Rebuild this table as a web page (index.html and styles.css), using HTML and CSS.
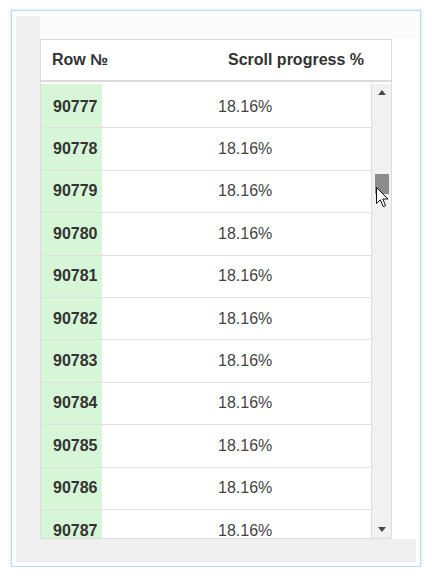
FILE: index.html
```html
<!DOCTYPE html>
<html>
<head>
<meta charset="utf-8">
<link rel="stylesheet" href="styles.css">
</head>
<body>
<div class="frame">
  <div class="sheet">
    <div class="gutter-left"></div>
    <div class="gutter-top"></div>
    <div class="grid">
      <div class="grid-head">
        <span>Row №</span>
        <span>Scroll progress %</span>
      </div>
      <div class="grid-body">
        <div class="rows">
          <div class="row"><span class="num">90777</span><span class="val">18.16%</span></div>
          <div class="row"><span class="num">90778</span><span class="val">18.16%</span></div>
          <div class="row"><span class="num">90779</span><span class="val">18.16%</span></div>
          <div class="row"><span class="num">90780</span><span class="val">18.16%</span></div>
          <div class="row"><span class="num">90781</span><span class="val">18.16%</span></div>
          <div class="row"><span class="num">90782</span><span class="val">18.16%</span></div>
          <div class="row"><span class="num">90783</span><span class="val">18.16%</span></div>
          <div class="row"><span class="num">90784</span><span class="val">18.16%</span></div>
          <div class="row"><span class="num">90785</span><span class="val">18.16%</span></div>
          <div class="row"><span class="num">90786</span><span class="val">18.16%</span></div>
          <div class="row"><span class="num">90787</span><span class="val">18.16%</span></div>
        </div>
        <div class="scrollbar">
          <div class="arrow up"></div>
          <div class="track"><div class="thumb"></div></div>
          <div class="arrow down"></div>
        </div>
        <svg class="cursor" width="14" height="21" viewBox="0 0 14 21">
          <path d="M0.5 0.5 L0.5 16.5 L4.3 12.8 L7.2 19.6 L9.6 18.6 L6.8 12 L12 12 Z" fill="#fff" stroke="#111" stroke-width="1"/>
        </svg>
      </div>
    </div>
    <div class="gutter-right"></div>
    <div class="gutter-bottom"></div>
  </div>
</div>
</body>
</html>
```
FILE: styles.css
```css
html, body {
  margin: 0;
  padding: 0;
  background: #fff;
}
body {
  font-family: "Liberation Sans", Arial, sans-serif;
}
.frame {
  box-sizing: border-box;
  margin: 10px 0 0 11px;
  width: 410px;
  height: 557px;
  border: 1px solid #b4dcee;
  box-shadow: 0 0 3px 1px #dcf0f8;
  padding: 5px 4px 4px 4px;
  background: #fff;
}
.sheet {
  width: 400px;
  height: 546px;
  display: grid;
  grid-template-columns: 24px 352px 24px;
  grid-template-rows: 23px 500px 23px;
}
.gutter-left {
  grid-column: 1;
  grid-row: 1 / 3;
  background: #efefef;
}
.gutter-top {
  grid-column: 2 / 4;
  grid-row: 1;
  background: #fbfbfb;
}
.gutter-right {
  grid-column: 3;
  grid-row: 2;
  background: #fff;
}
.gutter-bottom {
  grid-column: 1 / 4;
  grid-row: 3;
  background: #efefef;
}
.grid {
  grid-column: 2;
  grid-row: 2;
  box-sizing: border-box;
  border: 1px solid #dcdcdc;
  display: flex;
  flex-direction: column;
  background: #fff;
  overflow: hidden;
}
.grid-head {
  flex: none;
  height: 40px;
  border-bottom: 2px solid #dadada;
  display: flex;
  align-items: center;
  justify-content: space-between;
  padding: 0 27px 0 11px;
  font-size: 16px;
  font-weight: bold;
  color: #333;
}
.grid-body {
  flex: 1;
  position: relative;
  display: flex;
  margin-top: 2px;
  overflow: hidden;
}
.rows {
  flex: 1;
  padding-top: 2px;
  background: linear-gradient(to right, #d7f6d7 61px, #fff 61px);
  overflow: hidden;
}
.row {
  box-sizing: border-box;
  height: 42.4px;
  border-bottom: 1px solid #e1e1e1;
  display: flex;
  align-items: center;
  font-size: 16px;
}
.num {
  width: 61px;
  box-sizing: border-box;
  padding-left: 12px;
  font-weight: bold;
  color: #333;
}
.val {
  padding-left: 116px;
  color: #444;
}
.scrollbar {
  flex: none;
  width: 19px;
  border-left: 1px solid #dcdcdc;
  background: #f1f1f1;
  display: flex;
  flex-direction: column;
  align-items: center;
}
.arrow {
  flex: none;
  width: 0;
  height: 0;
  border-left: 4px solid transparent;
  border-right: 4px solid transparent;
}
.arrow.up {
  margin-top: 6px;
  border-bottom: 5px solid #4a4a4a;
}
.arrow.down {
  margin-bottom: 6px;
  border-top: 5px solid #4a4a4a;
}
.track {
  flex: 1;
  width: 100%;
  display: flex;
  justify-content: center;
}
.thumb {
  margin-top: 79px;
  width: 14px;
  height: 20px;
  background: #8c8c8c;
}
.cursor {
  position: absolute;
  left: 335px;
  top: 103px;
}
```
